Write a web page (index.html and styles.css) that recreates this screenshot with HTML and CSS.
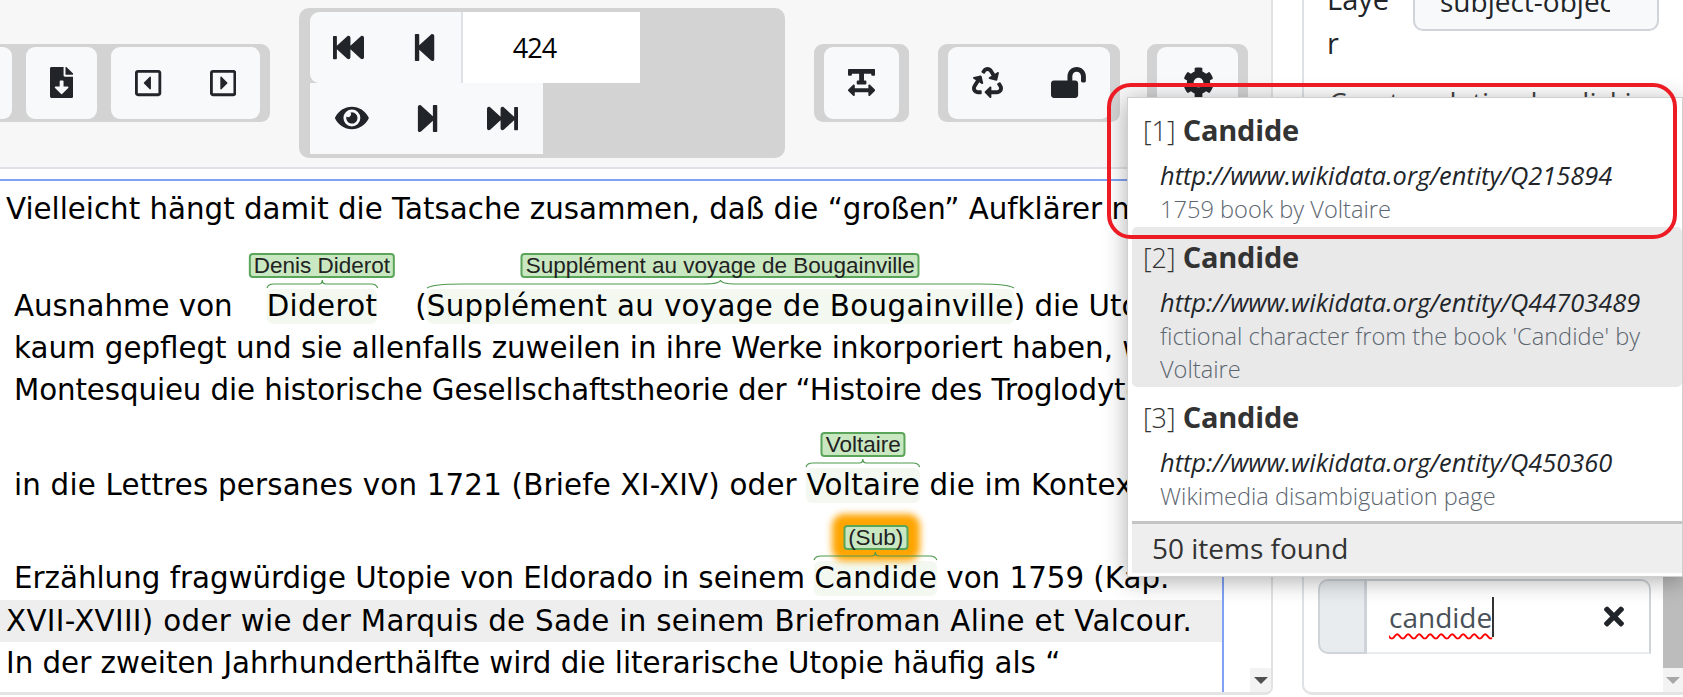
FILE: index.html
```html
<!DOCTYPE html>
<html lang="de">
<head>
<meta charset="utf-8">
<title>Annotation</title>
<link rel="stylesheet" href="styles.css">
</head>
<body>
<div class="page">
  <div class="main">
    <div class="toolbar">
      <div class="group first">
        <div class="btn stub"></div>
        <div class="btn"><svg class="ic" viewBox="0 0 384 512"><path d="M224 136V0H24C10.7 0 0 10.7 0 24v464c0 13.3 10.7 24 24 24h336c13.3 0 24-10.7 24-24V160H248c-13.2 0-24-10.8-24-24zm76.45 211.36l-96.42 95.7c-6.65 6.61-17.39 6.61-24.04 0l-96.42-95.7C73.42 337.29 80.54 320 94.82 320H160v-80c0-8.84 7.16-16 16-16h32c8.84 0 16 7.16 16 16v80h65.18c14.28 0 21.4 17.29 11.27 27.36zM377 105L279.1 7c-4.5-4.5-10.6-7-17-7H256v128h128v-6.1c0-6.3-2.5-12.4-7-16.9z"/></svg></div>
        <div class="btn">
          <svg class="ic sm" viewBox="0 0 448 512"><path d="M272 157.1v197.8c0 10.7-13 16.1-20.5 8.5l-98.3-98.9c-4.7-4.7-4.7-12.2 0-16.9l98.3-98.9c7.5-7.7 20.5-2.3 20.5 8.4zM448 80v352c0 26.5-21.5 48-48 48H48c-26.5 0-48-21.5-48-48V80c0-26.5 21.5-48 48-48h352c26.5 0 48 21.5 48 48zm-48 346V86c0-3.3-2.7-6-6-6H54c-3.3 0-6 2.7-6 6v340c0 3.3 2.7 6 6 6h340c3.3 0 6-2.7 6-6z"/></svg>
          <svg class="ic sm" viewBox="0 0 448 512"><path d="M176 354.9V157.1c0-10.7 13-16.1 20.5-8.5l98.3 98.9c4.7 4.7 4.7 12.2 0 16.9l-98.3 98.9c-7.5 7.7-20.5 2.3-20.5-8.4zM448 80v352c0 26.5-21.5 48-48 48H48c-26.5 0-48-21.5-48-48V80c0-26.5 21.5-48 48-48h352c26.5 0 48 21.5 48 48zm-48 346V86c0-3.3-2.7-6-6-6H54c-3.3 0-6 2.7-6 6v340c0 3.3 2.7 6 6 6h340c3.3 0 6-2.7 6-6z"/></svg>
        </div>
      </div>
      <div class="nav">
        <div class="nav-row">
          <div class="nav-btns top">
            <span class="nb w78"><svg class="ic" viewBox="0 0 512 512"><path d="M0 436V76c0-6.6 5.4-12 12-12h40c6.6 0 12 5.4 12 12v151.9L235.5 71.4C256.1 54.3 288 68.6 288 96v131.9L459.5 71.4C480.1 54.3 512 68.6 512 96v320c0 27.4-31.9 41.7-52.5 24.6L288 285.3V416c0 27.4-31.9 41.7-52.5 24.6L64 285.3V436c0 6.6-5.4 12-12 12H12c-6.6 0-12-5.4-12-12z"/></svg></span>
            <span class="nb w73"><svg class="ic" viewBox="0 0 448 512"><path d="M64 468V44c0-6.6 5.4-12 12-12h48c6.6 0 12 5.4 12 12v176.4l195.5-181C352.1 22.3 384 36.6 384 64v384c0 27.4-31.9 41.7-52.5 24.6L136 292.7V468c0 6.6-5.4 12-12 12H76c-6.6 0-12-5.4-12-12z"/></svg></span>
          </div>
          <div class="page-no">424</div>
        </div>
        <div class="nav-row">
          <div class="nav-btns">
            <span class="nb w84"><svg class="ic eye" viewBox="0 0 576 512"><path d="M572.52 241.4C518.29 135.59 410.93 64 288 64S57.68 135.64 3.48 241.41a32.35 32.35 0 0 0 0 29.19C57.71 376.41 165.07 448 288 448s230.32-71.64 284.52-177.41a32.35 32.35 0 0 0 0-29.19zM288 400a144 144 0 1 1 144-144 143.93 143.93 0 0 1-144 144zm0-240a95.31 95.31 0 0 0-25.31 3.79 47.85 47.85 0 0 1-66.9 66.9A95.78 95.78 0 1 0 288 160z"/></svg></span>
            <span class="nb w68"><svg class="ic" viewBox="0 0 448 512"><path d="M384 44v424c0 6.6-5.4 12-12 12h-48c-6.6 0-12-5.4-12-12V291.6l-195.5 181C95.9 489.7 64 475.4 64 448V64c0-27.4 31.9-41.7 52.5-24.6L312 219.3V44c0-6.6 5.4-12 12-12h48c6.6 0 12 5.4 12 12z"/></svg></span>
            <span class="nb w81"><svg class="ic" viewBox="0 0 512 512"><path d="M512 76v360c0 6.6-5.4 12-12 12h-40c-6.6 0-12-5.4-12-12V284.1L276.5 440.6c-20.6 17.2-52.5 2.8-52.5-24.6V284.1L52.5 440.6C31.9 457.8 0 443.4 0 416V96c0-27.4 31.9-41.7 52.5-24.6L224 226.8V96c0-27.4 31.9-41.7 52.5-24.6L448 226.8V76c0-6.6 5.4-12 12-12h40c6.6 0 12 5.4 12 12z"/></svg></span>
          </div>
        </div>
      </div>
      <div class="group">
        <div class="btn"><svg class="ic" viewBox="0 0 448 512"><path d="M432 32H16A16 16 0 0 0 0 48v80a16 16 0 0 0 16 16h32a16 16 0 0 0 16-16v-16h120v112h-24a16 16 0 0 0-16 16v32a16 16 0 0 0 16 16h128a16 16 0 0 0 16-16v-32a16 16 0 0 0-16-16h-24V112h120v16a16 16 0 0 0 16 16h32a16 16 0 0 0 16-16V48a16 16 0 0 0-16-16zm-68.69 260.69C354 283.36 336 288.36 336 304v48H112v-48c0-14.31-17.31-21.32-27.31-11.31l-80 80a16 16 0 0 0 0 22.62l80 80C94 484.64 112 479.64 112 464v-48h224v48c0 14.31 17.31 21.32 27.31 11.31l80-80a16 16 0 0 0 0-22.62z"/></svg></div>
      </div>
      <div class="group">
        <div class="btn">
          <svg class="ic" viewBox="0 0 512 512"><path d="M184.561 261.903c3.232 13.997-12.123 24.635-24.068 17.168l-40.736-25.455-50.867 81.402C55.606 356.273 70.96 384 96.012 384H148c6.627 0 12 5.373 12 12v40c0 6.627-5.373 12-12 12H96.115c-75.334 0-121.302-83.048-81.408-146.88l50.822-81.388-40.725-25.448c-12.081-7.547-8.966-25.961 4.879-29.158l110.237-25.45c8.611-1.988 17.201 3.381 19.189 11.99l25.452 110.237zm98.561-182.915l41.289 66.076-40.74 25.457c-12.051 7.528-9 25.953 4.879 29.158l110.237 25.45c8.672 1.999 17.215-3.438 19.189-11.99l25.45-110.237c3.197-13.844-11.99-24.719-24.068-17.168l-40.687 25.424-41.263-66.082c-37.521-60.033-125.209-60.171-162.816 0l-17.963 28.766c-3.51 5.62-1.8 13.021 3.82 16.533l33.919 21.195c5.62 3.512 13.024 1.803 16.536-3.817l17.961-28.743c12.712-20.341 41.973-19.676 54.257-.022zM497.288 301.12l-27.515-44.065c-3.511-5.623-10.916-7.334-16.538-3.821l-33.861 21.159c-5.62 3.512-7.33 10.915-3.818 16.536l27.564 44.112c13.257 21.211-2.057 48.96-27.136 48.96H320V336.02c0-14.213-17.242-21.383-27.313-11.313l-80 79.981c-6.249 6.248-6.249 16.379 0 22.627l80 79.989C302.689 517.308 320 510.3 320 495.989V448h95.88c75.274 0 121.335-82.997 81.408-146.88z"/></svg>
          <svg class="ic" viewBox="0 0 576 512"><path d="M423.5 0C339.5.3 272 69.5 272 153.5V224H48c-26.5 0-48 21.5-48 48v192c0 26.5 21.5 48 48 48h352c26.5 0 48-21.5 48-48V272c0-26.5-21.5-48-48-48h-48v-71.1c0-39.6 31.7-72.5 71.3-72.9 40-.4 72.7 32.1 72.7 72v80c0 13.3 10.7 24 24 24h32c13.3 0 24-10.7 24-24v-80C576 68 507.5-.3 423.5 0z"/></svg>
        </div>
      </div>
      <div class="group gear">
        <div class="btn"><svg class="ic" viewBox="0 0 512 512"><path d="M487.4 315.7l-42.6-24.6c4.3-23.2 4.3-47 0-70.2l42.6-24.6c4.9-2.8 7.1-8.6 5.5-14-11.1-35.6-30-67.8-54.7-94.6-3.8-4.1-10-5.1-14.8-2.3L380.8 110c-17.9-15.4-38.5-27.3-60.8-35.1V25.8c0-5.6-3.9-10.5-9.4-11.7-36.7-8.2-74.3-7.8-109.2 0-5.5 1.2-9.4 6.1-9.4 11.7V75c-22.2 7.9-42.8 19.8-60.8 35.1L88.7 85.5c-4.9-2.8-11-1.9-14.8 2.3-24.7 26.7-43.6 58.9-54.7 94.6-1.7 5.4.6 11.2 5.5 14L67.3 221c-4.3 23.2-4.3 47 0 70.2l-42.6 24.6c-4.9 2.8-7.1 8.6-5.5 14 11.1 35.6 30 67.8 54.7 94.6 3.8 4.1 10 5.1 14.8 2.3l42.6-24.6c17.9 15.4 38.5 27.3 60.8 35.1v49.2c0 5.6 3.9 10.5 9.4 11.7 36.7 8.2 74.3 7.8 109.2 0 5.5-1.2 9.4-6.1 9.4-11.7v-49.2c22.2-7.9 42.8-19.8 60.8-35.1l42.6 24.6c4.9 2.8 11 1.9 14.8-2.3 24.7-26.7 43.6-58.9 54.7-94.6 1.5-5.5-.7-11.3-5.6-14.1zM256 336c-44.1 0-80-35.9-80-80s35.9-80 80-80 80 35.9 80 80-35.9 80-80 80z"/></svg></div>
      </div>
    </div>
    <div class="editor">
      <div class="doc">
        <div class="line pt8">Vielleicht hängt damit die Tatsache zusammen, daß die “großen” Aufklärer mit</div>
        <div class="line pt55 ind">Ausnahme von<span class="anno wide"><span class="label">Denis Diderot</span><svg class="brace" viewBox="0 0 100 8" preserveAspectRatio="none"><path vector-effect="non-scaling-stroke" d="M0 8Q1 4 6 4H47Q50 4 50 0Q50 4 53 4H94Q99 4 100 8"/></svg>Diderot</span>(<span class="anno"><span class="label">Supplément au voyage de Bougainville</span><svg class="brace" viewBox="0 0 100 8" preserveAspectRatio="none"><path vector-effect="non-scaling-stroke" d="M0 8Q1 4 6 4H47Q50 4 50 0Q50 4 53 4H94Q99 4 100 8"/></svg>Supplément au voyage de Bougainville</span>) die Utopie</div>
        <div class="line ind">kaum gepflegt und sie allenfalls zuweilen in ihre Werke inkorporiert haben, wie</div>
        <div class="line ind tight">Montesquieu die historische Gesellschaftstheorie der “Histoire des Troglodyten”</div>
        <div class="line pt53 ind loose">in die Lettres persanes von 1721 (Briefe XI-XIV) oder <span class="anno"><span class="label">Voltaire</span><svg class="brace" viewBox="0 0 100 8" preserveAspectRatio="none"><path vector-effect="non-scaling-stroke" d="M0 8Q1 4 6 4H47Q50 4 50 0Q50 4 53 4H94Q99 4 100 8"/></svg>Voltaire</span> die im Kontext einer</div>
        <div class="line pt51 ind">Erzählung fragwürdige Utopie von Eldorado in seinem <span class="anno"><span class="label glow">(Sub)</span><svg class="brace" viewBox="0 0 100 8" preserveAspectRatio="none"><path vector-effect="non-scaling-stroke" d="M0 8Q1 4 6 4H47Q50 4 50 0Q50 4 53 4H94Q99 4 100 8"/></svg>Candide</span> von 1759 (Kap.</div>
        <div class="line active">XVII-XVIII) oder wie der Marquis de Sade in seinem Briefroman Aline et Valcour.</div>
        <div class="line">In der zweiten Jahrhunderthälfte wird die literarische Utopie häufig als “</div>
        <div class="line">utopischer Roman oder als Staatsroman aufgefasst und nimmt in der Folge teil</div>
      </div>
      <div class="gutter"><div class="track-arrow"><span class="tri dark"></span></div></div>
    </div>
  </div>
  <div class="panel">
    <div class="panel-body">
      <div class="form-row">
        <div class="form-label">Layer</div>
        <div class="form-select"><span>subject-object</span></div>
      </div>
      <div class="hint">Create relation by clicking on relations</div>
      <div class="search">
        <div class="prepend"></div>
        <div class="field"><span class="typed">candide</span><span class="caret"></span><svg class="clear" viewBox="0 0 352 512"><path d="M242.72 256l100.07-100.07c12.28-12.28 12.28-32.19 0-44.48l-22.24-22.24c-12.28-12.28-32.19-12.28-44.48 0L176 189.28 75.93 89.21c-12.28-12.28-32.19-12.28-44.48 0L9.21 111.45c-12.28 12.28-12.28 32.19 0 44.48L109.28 256 9.21 356.07c-12.28 12.28-12.28 32.19 0 44.48l22.24 22.24c12.28 12.28 32.2 12.28 44.48 0L176 322.72l100.07 100.07c12.28 12.28 32.2 12.28 44.48 0l22.24-22.24c12.28-12.28 12.28-32.19 0-44.48L242.72 256z"/></svg></div>
      </div>
    </div>
    <div class="vscroll"><div class="vs-space"></div><div class="vs-thumb"></div><div class="track-arrow"><span class="tri"></span></div></div>
  </div>
</div>

<div class="popup">
  <div class="results">
    <div class="item"><div class="title">[1] <b>Candide</b></div><div class="url">http://www.wikidata.org/entity/Q215894</div><div class="desc">1759 book by Voltaire</div></div>
    <div class="item sel"><div class="title">[2] <b>Candide</b></div><div class="url">http://www.wikidata.org/entity/Q44703489</div><div class="desc">fictional character from the book 'Candide' by<br>Voltaire</div></div>
    <div class="item"><div class="title">[3] <b>Candide</b></div><div class="url">http://www.wikidata.org/entity/Q450360</div><div class="desc">Wikimedia disambiguation page</div></div>
  </div>
  <div class="found">50 items found</div>
</div>
<div class="redbox"></div>
</body>
</html>
```
FILE: styles.css
```css
* { box-sizing: border-box; }
html, body { margin: 0; height: 697px; overflow: hidden; background: #fff; }
body { font-family: "Open Sans", "Noto Sans", sans-serif; color: #212529; }
.page { display: flex; height: 695px; justify-content: space-between; }
.main { width: 1273px; display: flex; flex-direction: column; border-right: 2px solid #e2e2e2; border-bottom: 3px solid #e4e4e4; border-bottom-right-radius: 8px; overflow: hidden; }

.toolbar { height: 169px; flex: none; background: #f7f7f7; border-bottom: 2px solid #dee2e6; display: flex; align-items: center; gap: 29px; margin-left: -60px; padding-bottom: 2px; }
.group { display: flex; gap: 14px; background: #d3d3d3; border-radius: 9px; padding: 3px 10px; height: 78px; }
.group.gear { margin-left: -2px; }
.group.gear .btn { padding-left: 26px; }
.btn { display: flex; align-items: center; gap: 48px; background: #f8f9fa; border-radius: 9px; padding: 0 24px; height: 72px; }
.btn.stub { width: 62px; padding: 0; }
.ic { height: 31px; fill: #212529; display: block; flex: none; }
.ic.sm { height: 30px; }
.eye { height: 30px; }

.nav { width: 486px; height: 150px; background: #d3d3d3; border-radius: 10px; padding: 4px 0 4px 11px; }
.nav-row { display: flex; height: 71px; }
.nav-btns { display: flex; background: #f8f9fa; }
.nav-btns.top { border-radius: 9px 0 0 9px; border-right: 2px solid #dee2e6; }
.nb { display: flex; align-items: center; justify-content: center; }
.w78 { width: 78px; }
.w73 { width: 73px; }
.w84 { width: 84px; }
.w68 { width: 68px; }
.w81 { width: 81px; }
.page-no { width: 177px; background: #fff; color: #000; font-size: 27px; letter-spacing: -1px; padding-left: 50px; line-height: 71px; }

.editor { flex: 1; min-height: 0; display: flex; background: #fff; padding-top: 10px; }
.doc { width: 1224px; flex: none; border-top: 2px solid #7fa2f4; border-right: 2px solid #7fa2f4; overflow: hidden; font-family: "DejaVu Sans", sans-serif; font-size: 29.3px; color: #000; white-space: nowrap; }
.line { line-height: 42px; padding-left: 6px; }
.ind { padding-left: 14px; }
.pt8 { padding-top: 7px; }
.pt55 { padding-top: 55px; }
.pt53 { padding-top: 53px; }
.pt51 { padding-top: 51px; }
.tight { letter-spacing: -.1px; }
.loose { letter-spacing: .2px; }
.active { background: #eee; margin-top: 1px; letter-spacing: .33px; }
.anno { position: relative; display: inline-block; background: #f3f9f1; border-radius: 6px; line-height: 35px; letter-spacing: .35px; }
.anno.wide { margin: 0 38px 0 34px; }
.label { position: absolute; left: 50%; bottom: 46px; transform: translateX(-50%); background: #c9e8c2; border: 2px solid #5aa55a; border-radius: 4px; font-family: "Liberation Sans", sans-serif; font-size: 22.5px; letter-spacing: 0; line-height: 21px; padding: 0 3px; color: #222; white-space: nowrap; }
.glow { box-shadow: 0 0 7px 11px #ffa500; }
.brace { position: absolute; left: 0; bottom: 36px; width: 100%; height: 8px; fill: none; stroke: #4f9a4f; stroke-width: 1.2; overflow: visible; }

.gutter { flex: 1; display: flex; flex-direction: column; justify-content: flex-end; padding-left: 26px; }
.track-arrow { height: 24px; background: #f3f3f3; display: flex; align-items: center; justify-content: center; width: 100%; }
.tri { width: 0; height: 0; border: 7px solid transparent; border-top: 7px solid #a8a8a8; border-bottom: 0; }
.tri.dark { border-top-color: #505050; }

.panel { width: 381px; flex: none; display: flex; border-left: 2px solid #dee2e6; border-bottom: 3px solid #e4e4e4; border-bottom-left-radius: 10px; overflow: hidden; }
.panel-body { flex: 1; display: flex; flex-direction: column; padding-left: 14px; min-width: 0; }
.form-row { display: flex; margin-top: -23px; gap: 22px; flex: none; }
.form-label { width: 73px; padding-left: 9px; font-size: 29px; line-height: 44px; word-break: break-all; }
.form-select { width: 246px; height: 56px; margin-top: -2px; background: #f8f9fa; border: 2px solid #ced4da; border-radius: 10px; padding-left: 25px; font-size: 28px; line-height: 48px; overflow: hidden; white-space: nowrap; }
.form-select span { display: block; width: 170px; overflow: hidden; }
.hint { font-size: 28px; line-height: 36px; padding-left: 11px; margin-top: 19px; white-space: nowrap; overflow: hidden; color: #444; }
.search { margin-top: auto; margin-bottom: 38px; width: 333px; height: 75px; display: flex; flex: none; }
.prepend { width: 49px; background: #e9ecef; border: 2px solid #ced4da; border-right-width: 3px; border-radius: 10px 0 0 10px; }
.field { flex: 1; display: flex; align-items: center; padding-left: 22px; background: #fff; border: 2px solid #ced4da; border-left: 0; border-radius: 0 10px 0 0; border-bottom-color: #e9ecef; color: #495057; font-size: 28px; }
.typed { text-decoration: underline wavy #f00 1.5px; text-underline-offset: 5px; }
.caret { width: 2px; height: 40px; background: #333; }
.clear { width: 20px; height: 29px; fill: #212529; margin-left: auto; margin-right: 25px; }

.vscroll { width: 20px; flex: none; display: flex; flex-direction: column; }
.vs-space { height: 110px; }
.vs-thumb { flex: 1; background: #bcbcbc; }

.popup { position: absolute; left: 1127px; top: 97px; width: 556px; height: 480px; background: #fff; border: 1px solid #cfcfcf; box-shadow: 0 4px 22px rgba(0,0,0,.32); padding: 2px 0 3px 4px; display: flex; flex-direction: column; overflow: hidden; }
.results { flex: 1; overflow: hidden; }
.item { padding: 12px 0 0 11px; color: #333; border-radius: 5px; }
.item.sel { background: #e9e9e9; }
.title { font-size: 27px; height: 38px; line-height: 38px; margin-bottom: 8px; font-weight: 300; }
.title b { font-size: 29px; line-height: 30px; font-weight: 700; letter-spacing: -.2px; }
.url { font-style: italic; font-size: 25.4px; line-height: 35px; padding-left: 17px; color: #212529; }
.desc { font-size: 23.6px; line-height: 33.5px; padding-left: 17px; font-weight: 300; color: #5c6670; white-space: nowrap; }
.found { height: 52px; flex: none; background: #eee; border-top: 3px solid #c4c4c4; font-size: 28px; line-height: 49px; padding-left: 20px; color: #333; }

.redbox { position: absolute; left: 1107px; top: 83px; width: 570px; height: 156px; border: 4.5px solid #ed1c24; border-radius: 24px; }
```
